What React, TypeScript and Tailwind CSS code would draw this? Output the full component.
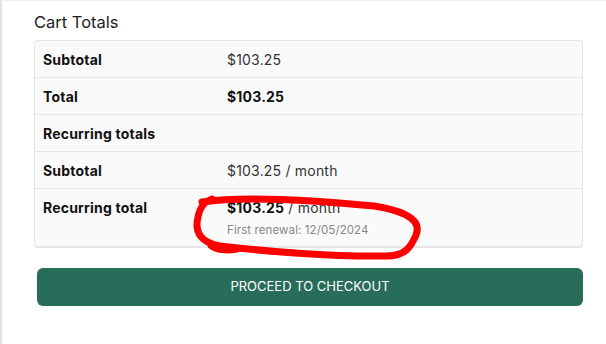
const rows = [
  { label: "Subtotal", value: "$103.25", bold: false },
  { label: "Total", value: "$103.25", bold: true },
  { label: "Recurring totals", value: "", bold: false },
  { label: "Subtotal", value: "$103.25 / month", bold: false },
];

export default function App() {
  return (
    <div
      className="relative w-[606px] h-[344px] bg-white border-l-2 border-t border-l-[#e3e3e3] border-t-[#f0f0f0] overflow-hidden"
      style={{ fontFamily: "Inter, 'Open Sans', sans-serif" }}
    >
      <div className="pl-[32px] pr-[23px] pt-[10px]">
        <h2 className="text-[16.5px] leading-[22px] text-[#222] mb-[7px]">Cart Totals</h2>

        <div className="rounded-[4px] border border-[#e6e6e6] border-b-[2px] bg-[#fafafa] divide-y divide-[#e6e6e6]">
          {rows.map((r, i) => (
            <div key={i} className="flex items-center h-[37px] px-[8px]">
              <div className="w-[184px] text-[14px] tracking-[0.2px] font-bold text-[#111]">{r.label}</div>
              <div className={`text-[14px] tracking-[0.2px] ${r.bold ? "font-bold text-[#111]" : "text-[#333]"}`}>{r.value}</div>
            </div>
          ))}
          <div className="flex px-[8px] pt-[8px] h-[57px]">
            <div className="w-[184px] text-[14px] tracking-[0.2px] font-bold text-[#111]">Recurring total</div>
            <div>
              <div className="text-[14px] tracking-[0.2px] text-[#333]">
                <span className="font-bold text-[#111]">$103.25</span> / month
              </div>
              <div className="text-[11.5px] tracking-[0.1px] text-[#888] mt-[4px]">First renewal: 12/05/2024</div>
            </div>
          </div>
        </div>

        <button className="mt-[20px] ml-[3px] w-[546px] h-[38px] rounded-[6px] bg-[#286c5a] text-white text-[13px] uppercase">
          Proceed to checkout
        </button>
      </div>

      {/* red marker annotation */}
      <svg className="absolute left-0 top-0 pointer-events-none" width="606" height="344">
        <path
          d="M 200 201 C 240 195, 310 199, 372 205 C 410 211, 419 222, 414 234 C 409 246, 403 255, 385 255 C 330 256, 260 250, 218 245 C 200 242, 192 232, 196 216 C 198 206, 202 201, 210 198"
          fill="none"
          stroke="#ff0000"
          strokeWidth="7"
          strokeLinecap="round"
        />
        <path d="M 208 245 C 214 250, 225 251, 235 249" fill="none" stroke="#ff0000" strokeWidth="5" strokeLinecap="round" />
      </svg>
    </div>
  );
}
